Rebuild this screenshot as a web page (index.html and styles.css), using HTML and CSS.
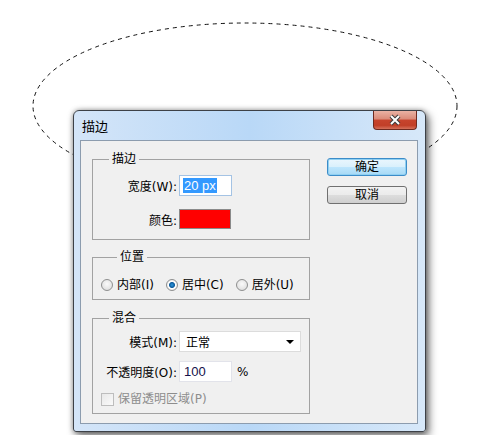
FILE: index.html
```html
<!DOCTYPE html>
<html>
<head>
    <meta charset="utf-8">
    <title>描边</title>
    <link rel="stylesheet" href="styles.css">
</head>
<body>
    <svg class="selection" width="486" height="435">
        <ellipse cx="245" cy="106" rx="212" ry="83"></ellipse>
    </svg>

    <div class="dialog">
        <div class="titlebar">
            <span class="title">描边</span>
            <button class="close" title="关闭">
                <svg width="14" height="12" viewBox="0 0 14 12">
                    <path class="x-outline" d="M3 2 L11 10 M11 2 L3 10"></path>
                    <path class="x-fill" d="M3 2 L11 10 M11 2 L3 10"></path>
                </svg>
            </button>
        </div>

        <div class="client">
            <div class="groups">
                <fieldset class="group group-stroke">
                    <legend>描边</legend>
                    <div class="form-grid">
                        <label>宽度(W):</label>
                        <div class="field focused"><span class="selected">20 px</span></div>
                        <label>颜色:</label>
                        <span class="swatch"></span>
                    </div>
                </fieldset>

                <fieldset class="group group-position">
                    <legend>位置</legend>
                    <div class="radio-row">
                        <span class="radio-item"><span class="radio"></span>内部(I)</span>
                        <span class="radio-item"><span class="radio checked"></span>居中(C)</span>
                        <span class="radio-item"><span class="radio"></span>居外(U)</span>
                    </div>
                </fieldset>

                <fieldset class="group group-blend">
                    <legend>混合</legend>
                    <div class="form-grid">
                        <label>模式(M):</label>
                        <div class="dropdown">正常<span class="arrow"></span></div>
                        <label>不透明度(O):</label>
                        <div class="field-unit">
                            <div class="field">100</div>
                            <span>%</span>
                        </div>
                    </div>
                    <div class="check-row">
                        <span class="checkbox"></span>保留透明区域(P)
                    </div>
                </fieldset>
            </div>

            <div class="buttons">
                <button class="btn default">确定</button>
                <button class="btn">取消</button>
            </div>
        </div>
    </div>
</body>
</html>
```

FILE: styles.css
```css
body {
    margin: 0;
    width: 486px;
    height: 435px;
    position: relative;
    overflow: hidden;
    background-color: #fff;
    font-family: "DejaVu Sans", "Noto Sans CJK SC", sans-serif;
    font-size: 12px;
    color: #000;
}

/* marching ants */
.selection {
    position: absolute;
    left: 0;
    top: 0;
}

.selection ellipse {
    fill: none;
    stroke: #111;
    stroke-width: 1;
    stroke-dasharray: 4 4;
}

.dialog {
    position: absolute;
    left: 73px;
    top: 110px;
    width: 353px;
    height: 322px;
    box-sizing: border-box;
    display: flex;
    flex-direction: column;
    border: 1px solid #3d4147;
    border-radius: 6px 6px 3px 3px;
    background: linear-gradient(to right, #d4e5f8, #b9d8f7 50%, #d7e8f9);
    box-shadow: 3px 4px 9px rgba(0, 0, 0, 0.55), 0 0 5px rgba(0, 0, 0, 0.35);
}

.titlebar {
    height: 29px;
    display: flex;
    align-items: flex-start;
    padding-left: 8px;
}

.title {
    margin-top: 8px;
    line-height: 16px;
    font-size: 13px;
}

.close {
    margin-left: auto;
    margin-right: 8px;
    width: 44px;
    height: 19px;
    padding: 0;
    display: flex;
    align-items: center;
    justify-content: center;
    border: 1px solid #6e2a20;
    border-top: none;
    border-radius: 0 0 4px 4px;
    background: linear-gradient(to bottom, #eab2a4, #da8a78 45%, #c7442d 50%, #c13f28 80%, #d5715b);
}

.x-outline {
    fill: none;
    stroke: #3c3c3c;
    stroke-width: 4;
}

.x-fill {
    fill: none;
    stroke: #fff;
    stroke-width: 2;
}

.client {
    flex: 1;
    margin: 0 7px 7px 6px;
    display: flex;
    gap: 17px;
    padding: 0 10px 0 11px;
    border: 1px solid #8c9cae;
    background-color: #f0f0f0;
}

.groups {
    width: 218px;
    padding-top: 10px;
}

.group {
    margin: 0;
    padding: 0;
    min-width: 0;
    border: 1px solid #a2a2a2;
}

.group legend {
    margin-left: 16px;
    padding: 0 3px;
    line-height: 16px;
}

.group-stroke {
    padding-top: 8px;
    padding-bottom: 10px;
}

.group-position {
    margin-top: 9px;
    padding: 12px 0 6px 8px;
}

.group-blend {
    margin-top: 10px;
    padding-top: 5px;
    padding-bottom: 6px;
}

.form-grid {
    display: grid;
    grid-template-columns: 84px auto;
    column-gap: 2px;
    row-gap: 9px;
    align-items: center;
}

.group-stroke .form-grid {
    row-gap: 13px;
}

.form-grid label {
    text-align: right;
    white-space: nowrap;
}

.field {
    width: 53px;
    height: 21px;
    box-sizing: border-box;
    padding: 0 4px;
    line-height: 19px;
    font-family: "Liberation Sans", sans-serif;
    font-size: 13px;
    color: #14104a;
    border: 1px solid #e2e3ea;
    background-color: #fff;
}

.field.focused {
    border-color: #a4c3e4;
    padding: 2px 3px;
    line-height: 15px;
}

.selected {
    display: inline-block;
    padding: 0 1px;
    background-color: #3399ff;
    color: #fff;
}

.swatch {
    width: 52px;
    height: 20px;
    box-sizing: border-box;
    border: 1px solid #8a8a8a;
    background-color: #ff0000;
}

.radio-row {
    display: flex;
    gap: 12px;
}

.radio-item {
    display: flex;
    align-items: center;
    gap: 4px;
    line-height: 16px;
}

.radio {
    width: 12px;
    height: 12px;
    box-sizing: border-box;
    border-radius: 50%;
    border: 1px solid #8e8f8f;
    background: radial-gradient(circle at 50% 40%, #fafafa, #d8d8d8);
}

.radio.checked {
    background: radial-gradient(circle, #2f9be0 0, #0b5a9c 2.5px, #ffffff 3.5px, #d4d4d4 100%);
}

.dropdown {
    width: 122px;
    height: 21px;
    box-sizing: border-box;
    display: flex;
    align-items: center;
    padding: 0 6px;
    border: 1px solid #dcdcdc;
    background-color: #fff;
}

.arrow {
    margin-left: auto;
    border-left: 4px solid transparent;
    border-right: 4px solid transparent;
    border-top: 4px solid #000;
}

.field-unit {
    display: flex;
    align-items: center;
    gap: 5px;
}

.check-row {
    display: flex;
    align-items: center;
    gap: 4px;
    margin-top: 9px;
    padding-left: 8px;
    line-height: 16px;
    color: #8d8d8d;
}

.checkbox {
    width: 13px;
    height: 13px;
    box-sizing: border-box;
    border: 1px solid #bdbdbd;
    background: linear-gradient(135deg, #e8e8e8, #fafafa);
}

.buttons {
    width: 80px;
    padding-top: 17px;
    display: flex;
    flex-direction: column;
    gap: 10px;
}

.btn {
    height: 18px;
    padding: 0;
    font-family: inherit;
    font-size: 12px;
    line-height: 16px;
    color: #000;
    border: 1px solid #707070;
    border-radius: 3px;
    background: linear-gradient(to bottom, #f2f2f2, #ebebeb 50%, #dddddd 50%, #cfcfcf);
}

.btn.default {
    border-color: #3c8cc8;
    box-shadow: inset 0 0 0 1px #8fd0f2;
    background: linear-gradient(to bottom, #eaf6fd, #d9f0fc 50%, #bee6fd 50%, #a7d9f5);
}
```
